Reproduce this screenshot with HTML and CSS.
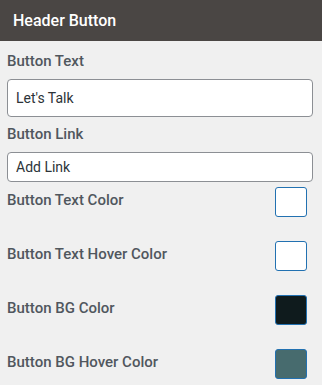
FILE: index.html
```html
<!DOCTYPE html>
<html>
<head>
<meta charset="utf-8">
<link rel="stylesheet" href="styles.css">
</head>
<body>
<div class="panel">
  <div class="panel-header">Header Button</div>
  <div class="panel-body">
    <label class="field-label">Button Text</label>
    <input class="text-input tall" type="text" value="Let's Talk">
    <label class="field-label">Button Link</label>
    <input class="text-input" type="text" value="Add Link">
    <div class="color-list">
      <div class="color-row">
        <span class="color-label">Button Text Color</span>
        <span class="swatch swatch-white"></span>
      </div>
      <div class="color-row">
        <span class="color-label">Button Text Hover Color</span>
        <span class="swatch swatch-white"></span>
      </div>
      <div class="color-row">
        <span class="color-label">Button BG Color</span>
        <span class="swatch swatch-dark"></span>
      </div>
      <div class="color-row">
        <span class="color-label">Button BG Hover Color</span>
        <span class="swatch swatch-teal"></span>
      </div>
    </div>
  </div>
</div>
</body>
</html>
```

FILE: styles.css
```css
html, body {
  margin: 0;
  padding: 0;
  background: #f0f0f0;
  font-family: Roboto, "Liberation Sans", sans-serif;
}

.panel {
  width: 322px;
}

.panel-header {
  height: 41px;
  background: #4a4644;
  color: #ffffff;
  font-size: 16px;
  font-weight: 500;
  display: flex;
  align-items: center;
  padding-left: 13px;
  box-sizing: border-box;
}

.panel-body {
  padding: 11px 9px 0 7px;
  display: flex;
  flex-direction: column;
}

.field-label {
  display: block;
  font-size: 15px;
  line-height: 18px;
  font-weight: 500;
  color: #50575e;
  margin-bottom: 9px;
}

.text-input {
  box-sizing: border-box;
  width: 100%;
  height: 30px;
  margin: 0 0 8px 0;
  padding: 0 8px;
  border: 1px solid #8c8f94;
  border-radius: 4px;
  background: #ffffff;
  font-family: Roboto, "Liberation Sans", sans-serif;
  font-size: 14px;
  color: #2c3338;
  outline: none;
}

.text-input.tall {
  height: 38px;
}

.color-list {
  display: flex;
  flex-direction: column;
  gap: 24px;
  margin-top: -3px;
}

.color-row {
  display: flex;
  justify-content: space-between;
  align-items: flex-start;
  padding-right: 6px;
}

.color-label {
  font-size: 15px;
  line-height: 18px;
  font-weight: 500;
  color: #50575e;
  margin-top: 4px;
}

.swatch {
  box-sizing: border-box;
  width: 32px;
  height: 30px;
  border: 1px solid #2271b1;
  border-radius: 3px;
}

.swatch-white { background: #ffffff; }
.swatch-dark { background: #0f1b1d; }
.swatch-teal { background: #476b6e; }
```
